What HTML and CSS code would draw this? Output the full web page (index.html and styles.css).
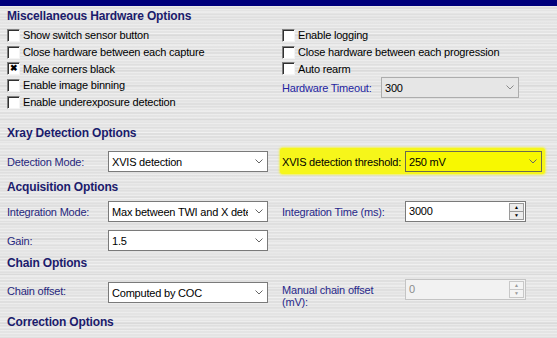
FILE: index.html
```html
<!DOCTYPE html>
<html lang="en">
<head>
<meta charset="UTF-8">
<title>Hardware Options</title>
<link rel="stylesheet" href="styles.css">
</head>
<body>
<div class="topbar"></div>

<h2 class="heading head-misc">Miscellaneous Hardware Options</h2>
<div class="misc">
  <div class="col">
    <label class="check"><span class="box"></span>Show switch sensor button</label>
    <label class="check"><span class="box"></span>Close hardware between each capture</label>
    <label class="check"><span class="box checked">&#x2716;</span>Make corners black</label>
    <label class="check"><span class="box"></span>Enable image binning</label>
    <label class="check"><span class="box"></span>Enable underexposure detection</label>
  </div>
  <div class="col">
    <label class="check"><span class="box"></span>Enable logging</label>
    <label class="check"><span class="box"></span>Close hardware between each progression</label>
    <label class="check"><span class="box"></span>Auto rearm</label>
    <div class="field">
      <span class="label label-timeout">Hardware Timeout:</span>
      <div class="select disabled sel-timeout"><span class="val">300</span><span class="arrow"><svg width="8" height="5" viewBox="0 0 8 5"><path d="M0.5 0.5 L4 4 L7.5 0.5" fill="none" stroke="#8a8a8a" stroke-width="1"/></svg></span></div>
    </div>
  </div>
</div>

<h2 class="heading head-xray">Xray Detection Options</h2>
<div class="row row-xray">
  <div class="cell">
    <span class="label">Detection Mode:</span>
    <div class="select"><span class="val">XVIS detection</span><span class="arrow"><svg width="8" height="5" viewBox="0 0 8 5"><path d="M0.5 0.5 L4 4 L7.5 0.5" fill="none" stroke="#666" stroke-width="1"/></svg></span></div>
  </div>
  <div class="cell">
    <div class="highlight">
      <span class="label label-hl">XVIS detection threshold:</span>
      <div class="select sel-hl"><span class="val">250 mV</span><span class="arrow"><svg width="8" height="5" viewBox="0 0 8 5"><path d="M0.5 0.5 L4 4 L7.5 0.5" fill="none" stroke="#666" stroke-width="1"/></svg></span></div>
    </div>
  </div>
</div>

<h2 class="heading head-acq">Acquisition Options</h2>
<div class="row row-integ">
  <div class="cell">
    <span class="label">Integration Mode:</span>
    <div class="select"><span class="val">Max between TWI and X detection</span><span class="arrow"><svg width="8" height="5" viewBox="0 0 8 5"><path d="M0.5 0.5 L4 4 L7.5 0.5" fill="none" stroke="#666" stroke-width="1"/></svg></span></div>
  </div>
  <div class="cell">
    <span class="label label-right">Integration Time (ms):</span>
    <div class="spin"><span class="val">3000</span><span class="spin-btns"><span class="btn">&#9650;</span><span class="btn">&#9660;</span></span></div>
  </div>
</div>
<div class="row row-gain">
  <div class="cell">
    <span class="label">Gain:</span>
    <div class="select"><span class="val">1.5</span><span class="arrow"><svg width="8" height="5" viewBox="0 0 8 5"><path d="M0.5 0.5 L4 4 L7.5 0.5" fill="none" stroke="#666" stroke-width="1"/></svg></span></div>
  </div>
</div>

<h2 class="heading head-chain">Chain Options</h2>
<div class="row row-chain">
  <div class="cell cell-top">
    <span class="label label-chain">Chain offset:</span>
    <div class="select sel-chain"><span class="val">Computed by COC</span><span class="arrow"><svg width="8" height="5" viewBox="0 0 8 5"><path d="M0.5 0.5 L4 4 L7.5 0.5" fill="none" stroke="#666" stroke-width="1"/></svg></span></div>
  </div>
  <div class="cell cell-top">
    <span class="label label-right label-two">Manual chain offset<br>(mV):</span>
    <div class="spin disabled"><span class="val">0</span><span class="spin-btns"><span class="btn">&#9650;</span><span class="btn">&#9660;</span></span></div>
  </div>
</div>

<h2 class="heading head-corr">Correction Options</h2>
</body>
</html>
```

FILE: styles.css
```css
body {
  margin: 0;
  padding: 0;
  width: 557px;
  height: 338px;
  overflow: hidden;
  font-family: "Liberation Sans", Arial, sans-serif;
  font-size: 11px;
  letter-spacing: -0.2px;
  color: #000;
  background-color: #e4e4e4;
  background-image:
    repeating-linear-gradient(180deg, rgba(255,255,255,.32) 0 1px, transparent 1px 3px),
    repeating-linear-gradient(180deg, rgba(0,0,0,.025) 0 2px, transparent 2px 7px),
    repeating-linear-gradient(180deg, rgba(255,255,255,.25) 0 1px, transparent 1px 11px),
    repeating-linear-gradient(180deg, rgba(0,0,0,.025) 0 3px, transparent 3px 17px);
}
.topbar {
  height: 6px;
  background: #00007c;
}
.heading {
  margin: 0;
  padding-left: 7px;
  height: 14px;
  line-height: 14px;
  font-size: 12px;
  font-weight: bold;
  letter-spacing: -0.15px;
  color: #1b1b6c;
}
.head-misc { margin-top: 3px; }
.head-xray { margin-top: 16px; }
.head-acq { margin-top: 8px; }
.head-chain { margin-top: 5px; }
.head-corr { margin-top: 11.5px; }

.misc {
  display: flex;
  padding-left: 7px;
  margin-top: 4px;
}
.col {
  width: 278px;
}
.check {
  display: flex;
  align-items: center;
  height: 16.7px;
}
.box {
  width: 13px;
  height: 13px;
  box-sizing: border-box;
  margin-right: 3px;
  background: #fff;
  border: 1px solid;
  border-color: #808080 #f4f4f4 #f4f4f4 #808080;
  box-shadow: inset 1px 1px 0 #303030;
  font-size: 9px;
  line-height: 11px;
  text-align: center;
  letter-spacing: 0;
}
.checked {
  font-weight: bold;
  color: #000;
}
.field {
  display: flex;
  align-items: center;
  height: 21px;
}
.label {
  width: 101px;
  flex: none;
  color: #27277d;
}
.label-timeout { width: 99px; color: #2323a0; }
.label-right { width: 123px; color: #28288a; }
.label-two { line-height: 12px; margin-top: 4.5px; }
.label-chain { margin-top: 6px; }

.row {
  display: flex;
  padding-left: 7px;
}
.row-xray { margin-top: 11px; }
.row-integ { margin-top: 7px; }
.row-gain { margin-top: 8px; }
.row-chain { margin-top: 9px; height: 24px; }
.cell {
  display: flex;
  align-items: center;
  width: 278px;
}
.cell-top { align-items: flex-start; }

.select {
  display: flex;
  align-items: center;
  width: 160px;
  height: 21px;
  box-sizing: border-box;
  background: #fff;
  border: 1px solid #7a7a7a;
}
.select .val {
  flex: 1;
  padding-left: 3px;
  white-space: nowrap;
  overflow: hidden;
}
.arrow {
  width: 17px;
  flex: none;
  display: flex;
  justify-content: center;
  padding-left: 2px;
}
.select.disabled {
  background: #e6e6e6;
  border-color: #adadad;
}
.sel-timeout { width: 138px; }
.sel-chain { margin-top: 3px; }

.highlight {
  display: flex;
  align-items: center;
  margin: -3px -3px -2px -2px;
  padding: 3px 3px 2px 2px;
  background: #f6f61a;
  border-radius: 3px;
  box-shadow: 0 0 2px 1px rgba(246, 246, 26, .7);
}
.label-hl {
  width: 123px;
  color: #000;
}
.sel-hl {
  width: 137px;
  background: #f8f800;
  border-color: #6b6b50;
}

.spin {
  display: flex;
  width: 121px;
  height: 21px;
  box-sizing: border-box;
  background: #fff;
  border: 1px solid #7a7a7a;
}
.spin .val {
  flex: 1;
  padding: 3px 0 0 3px;
}
.spin-btns {
  display: flex;
  flex-direction: column;
  width: 15px;
  padding: 1px 1px 1px 0;
}
.btn {
  flex: 1;
  background: #ececec;
  border: 1px solid #9a9a9a;
  font-size: 5px;
  line-height: 7px;
  text-align: center;
  letter-spacing: 0;
  color: #000;
}
.btn + .btn { border-top: none; }
.spin.disabled {
  background: #f2f2f2;
  border-color: #c4c4c4;
  color: #8c8c8c;
}
.spin.disabled .btn {
  background: #f4f4f4;
  border-color: #c8c8c8;
  color: #9a9a9a;
}
```
